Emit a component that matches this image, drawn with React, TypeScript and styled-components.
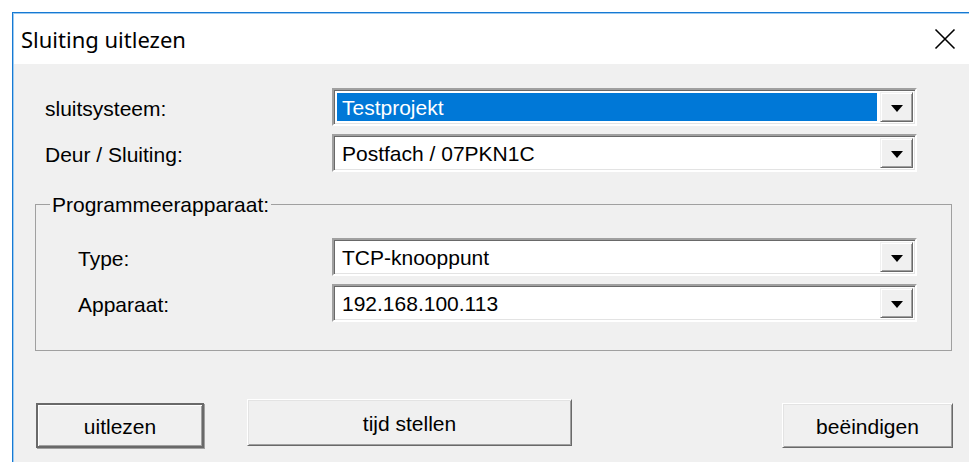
import React from "react";
import styled, { createGlobalStyle } from "styled-components";

const GlobalStyle = createGlobalStyle`
  html, body {
    margin: 0;
    padding: 0;
    background: #ffffff;
    overflow: hidden;
  }
  body {
    font-family: "Liberation Sans", Arial, sans-serif;
    color: #000;
  }
`;

interface ComboProps {
  value: string;
  selected?: boolean;
}

const Combo: React.FC<ComboProps> = ({ value, selected }) => (
  <ComboBox>
    <ComboValue $selected={!!selected}>{value}</ComboValue>
    <DropButton>
      <Arrow />
    </DropButton>
  </ComboBox>
);

const App: React.FC = () => {
  return (
    <>
      <GlobalStyle />
      <Page>
        <DialogWindow>
          <TitleBar>
            <Title>Sluiting uitlezen</Title>
            <CloseButton aria-label="close">
              <svg width="22" height="22" viewBox="0 0 22 22">
                <path
                  d="M1.5 1.5 L20.5 20.5 M20.5 1.5 L1.5 20.5"
                  stroke="#000"
                  strokeWidth="1.6"
                  fill="none"
                />
              </svg>
            </CloseButton>
          </TitleBar>

          <DialogBody>
            <Fields $indent={32}>
              <FieldRow>
                <FieldLabel $width={287}>sluitsysteem:</FieldLabel>
                <Combo value="Testprojekt" selected />
              </FieldRow>
              <FieldRow>
                <FieldLabel $width={287}>Deur / Sluiting:</FieldLabel>
                <Combo value="Postfach / 07PKN1C" />
              </FieldRow>
            </Fields>

            <GroupBox>
              <GroupLegend>Programmeerapparaat:</GroupLegend>
              <Fields $indent={42}>
                <FieldRow>
                  <FieldLabel $width={254}>Type:</FieldLabel>
                  <Combo value="TCP-knooppunt" />
                </FieldRow>
                <FieldRow>
                  <FieldLabel $width={254}>Apparaat:</FieldLabel>
                  <Combo value="192.168.100.113" />
                </FieldRow>
              </Fields>
            </GroupBox>

            <ButtonRow>
              <PushButton $width={168} $gap={23} $isDefault>
                uitlezen
              </PushButton>
              <PushButton $width={325} $gap={43} $lift={4}>
                tijd stellen
              </PushButton>
              <PushButton $width={171} $gap={210}>
                beëindigen
              </PushButton>
            </ButtonRow>
          </DialogBody>
        </DialogWindow>
      </Page>
    </>
  );
};

const Page = styled.div`
  width: 969px;
  height: 462px;
  padding: 12px 0 0 12px;
  box-sizing: border-box;
  overflow: hidden;
`;

const DialogWindow = styled.div`
  width: 970px;
  height: 470px;
  background: #f0f0f0;
  border-top: 1px solid #1679d3;
  border-left: 1px solid #1679d3;
  box-shadow: inset 1px 1px 0 #9ccaf0;
  display: flex;
  flex-direction: column;
`;

const TitleBar = styled.div`
  height: 50px;
  background: #ffffff;
  display: flex;
  align-items: center;
  justify-content: space-between;
  padding-left: 7px;
  margin: 1px 0 0 1px;
`;

const Title = styled.span`
  font-family: "Noto Sans", "Open Sans", sans-serif;
  font-size: 22px;
  color: #000;
  padding-bottom: 1px;
`;

const CloseButton = styled.div`
  width: 76px;
  height: 50px;
  display: flex;
  align-items: center;
  justify-content: center;
`;

const DialogBody = styled.div`
  display: flex;
  flex-direction: column;
  padding-top: 24px;
  font-size: 21px;
`;

const Fields = styled.div<{ $indent: number }>`
  display: flex;
  flex-direction: column;
  gap: 8px;
  padding-left: ${({ $indent }) => $indent}px;
`;

const FieldRow = styled.div`
  display: flex;
  align-items: center;
  height: 38px;
`;

const FieldLabel = styled.span<{ $width: number }>`
  width: ${({ $width }) => $width}px;
  font-size: 21px;
  padding-top: 4px;
`;

const ComboBox = styled.div`
  width: 585px;
  height: 38px;
  box-sizing: border-box;
  background: #ffffff;
  border: 2px solid;
  border-color: #a0a0a0 #ffffff #ffffff #a0a0a0;
  box-shadow: inset 1px 1px 0 #696969, inset -1px -1px 0 #e3e3e3;
  padding: 2px;
  display: flex;
  align-items: stretch;
`;

const ComboValue = styled.div<{ $selected: boolean }>`
  flex: 1;
  margin: 1px 3px 1px 1px;
  padding: 1px 0 0 5px;
  display: flex;
  align-items: center;
  font-size: 21px;
  background: ${({ $selected }) => ($selected ? "#0078d7" : "transparent")};
  color: ${({ $selected }) => ($selected ? "#ffffff" : "#000000")};
`;

const DropButton = styled.div`
  width: 33px;
  box-sizing: border-box;
  background: #f0f0f0;
  border: 1px solid;
  border-color: #f0f0f0 #696969 #696969 #f0f0f0;
  box-shadow: inset 1px 1px 0 #ffffff, inset -1px -1px 0 #a0a0a0;
  display: flex;
  align-items: center;
  justify-content: center;
`;

const Arrow = styled.div`
  width: 0;
  height: 0;
  border-left: 6px solid transparent;
  border-right: 6px solid transparent;
  border-top: 7px solid #000;
  margin-top: 2px;
`;

const GroupBox = styled.fieldset`
  width: 917px;
  box-sizing: border-box;
  margin: 21px 0 0 22px;
  padding: 0 0 28px 0;
  border: 1px solid #a0a0a0;
  min-width: 0;
`;

const GroupLegend = styled.legend`
  margin-left: 14px;
  padding: 0 2px;
  font-size: 21px;
  line-height: 23px;
  margin-bottom: 22px;
`;

const PushButton = styled.button<{
  $width: number;
  $gap: number;
  $isDefault?: boolean;
  $lift?: number;
}>`
  width: ${({ $width }) => $width}px;
  height: ${({ $lift }) => ($lift ? 47 : 45)}px;
  margin-left: ${({ $gap }) => $gap}px;
  margin-top: ${({ $lift }) => ($lift ? -$lift : 0)}px;
  font-family: "Liberation Sans", Arial, sans-serif;
  font-size: 21px;
  color: #000;
  background: #f0f0f0;
  padding: 2px 0 0;
  border: ${({ $isDefault }) => ($isDefault ? "2px" : "1px")} solid;
  border-color: ${({ $isDefault }) =>
    $isDefault
      ? "#696969"
      : "#ffffff #696969 #696969 #ffffff"};
  box-shadow: ${({ $isDefault }) =>
    $isDefault
      ? "inset 1px 1px 0 #ffffff, inset -1px -1px 0 #a0a0a0, 1px 1px 0 #a0a0a0"
      : "inset 1px 1px 0 #e3e3e3, inset -1px -1px 0 #a0a0a0"};
`;

const ButtonRow = styled.div`
  display: flex;
  align-items: flex-start;
  margin-top: 52px;
`;

export default App;
